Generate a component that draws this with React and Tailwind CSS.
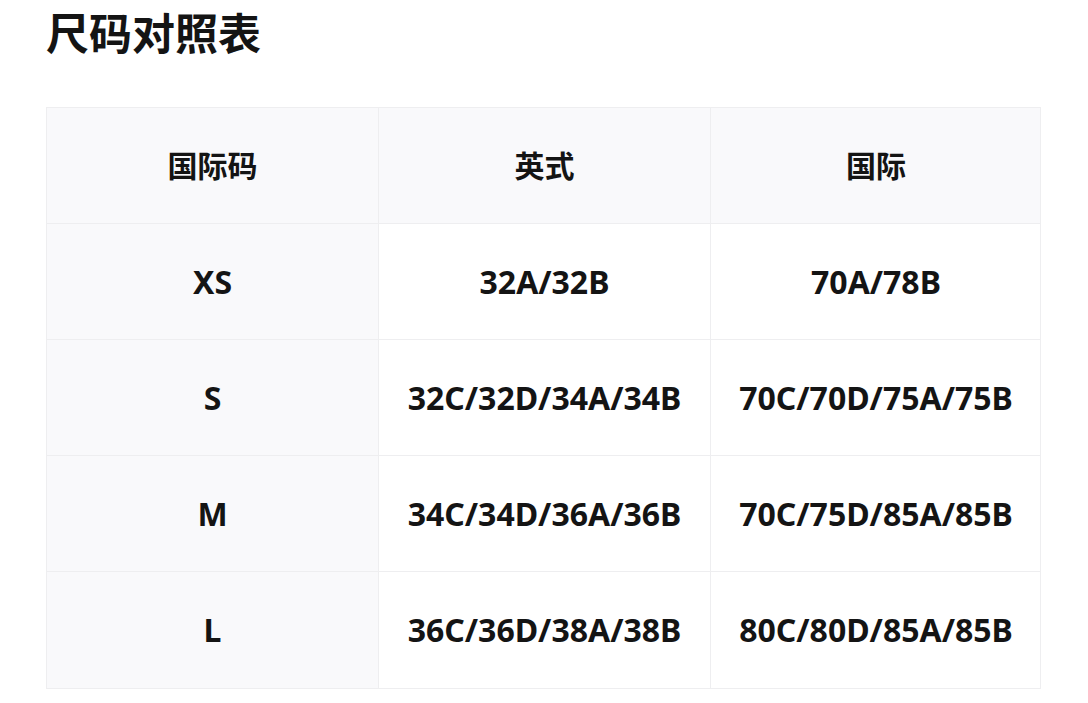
const rows = [
  ['XS', '32A/32B', '70A/78B'],
  ['S', '32C/32D/34A/34B', '70C/70D/75A/75B'],
  ['M', '34C/34D/36A/36B', '70C/75D/85A/85B'],
  ['L', '36C/36D/38A/38B', '80C/80D/85A/85B'],
];

const font = { fontFamily: '"Noto Sans", "Noto Sans CJK SC", sans-serif' };
const cols = 'grid grid-cols-[332px_332px_330px]';

export default function App() {
  return (
    <div className="min-h-[703px] w-[1088px] bg-white text-[#141414]" style={font}>
      <h1 className="pl-[46px] pt-[6px] text-[43px] font-bold leading-[56px]">尺码对照表</h1>
      <div className="ml-[46px] mt-[45px] w-[995px] border border-[#eeeef0]">
        <div className={`${cols} h-[116px] bg-[#f9f9fb] border-b border-[#eeeef0]`}>
          {['国际码', '英式', '国际'].map((h, i) => (
            <div
              key={h}
              className={`flex items-center justify-center text-[30px] font-bold ${i < 2 ? 'border-r border-[#eeeef0]' : ''}`}
            >
              {h}
            </div>
          ))}
        </div>
        {rows.map((r, ri) => (
          <div
            key={r[0]}
            className={`${cols} h-[116px] ${ri < rows.length - 1 ? 'border-b border-[#eeeef0]' : ''}`}
          >
            <div className="flex items-center justify-center bg-[#f9f9fb] border-r border-[#eeeef0] text-[32px] font-bold">
              {r[0]}
            </div>
            <div className="flex items-center justify-center border-r border-[#eeeef0] text-[32px] font-bold">
              {r[1]}
            </div>
            <div className="flex items-center justify-center text-[32px] font-bold">{r[2]}</div>
          </div>
        ))}
      </div>
    </div>
  );
}
